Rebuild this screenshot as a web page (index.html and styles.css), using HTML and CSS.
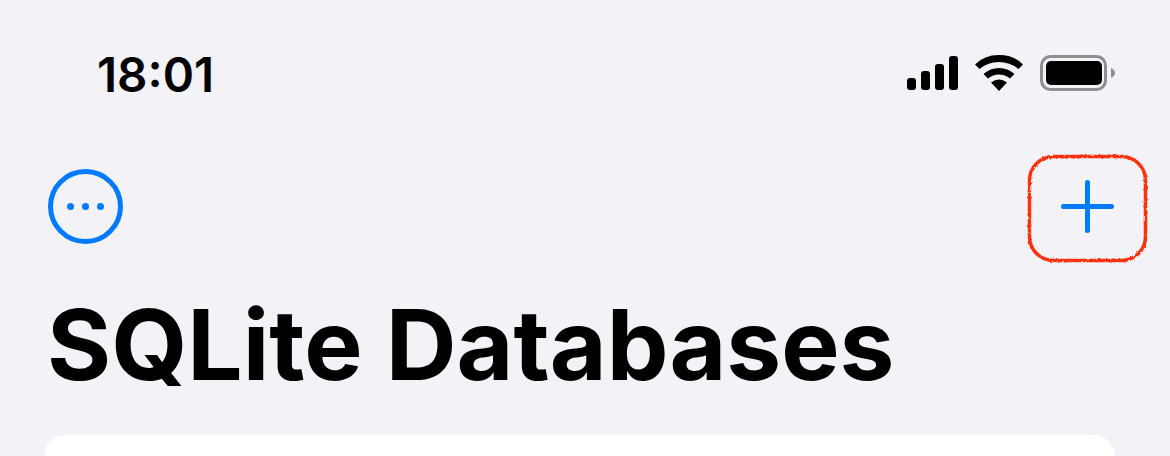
FILE: index.html
```html
<!DOCTYPE html>
<html lang="en">
<head>
    <meta charset="UTF-8">
    <meta name="viewport" content="width=device-width, initial-scale=1.0">
    <title>SQLite Databases</title>
    <link rel="stylesheet" href="styles.css">
</head>
<body>
    <div class="status-bar">
        <span class="time">18:01</span>
        <div class="status-icons">
            <svg class="signal" width="51" height="34" viewBox="0 0 51 34">
                <rect x="0" y="22" width="9" height="12" rx="3"/>
                <rect x="14" y="15" width="9" height="19" rx="3"/>
                <rect x="28" y="8" width="9" height="26" rx="3"/>
                <rect x="42" y="0" width="9" height="34" rx="3"/>
            </svg>
            <svg class="wifi" width="48" height="36" viewBox="0 0 48 36">
                <path d="M24 36 L16 27.500 Q24 21.500 32 27.500 Z"/>
                <path d="M24 0 Q9 0 0 9.500 L4.500 14 Q13 7 24 7 Q35 7 43.500 14 L48 9.500 Q39 0 24 0 Z"/>
                <path d="M24 13 Q15 13 8.500 19 L13 23.500 Q18 19.500 24 19.500 Q30 19.500 35 23.500 L39.500 19 Q33 13 24 13 Z"/>
            </svg>
            <svg class="battery" width="75" height="36" viewBox="0 0 75 36">
                <rect x="1.500" y="1.500" width="64" height="33" rx="9" fill="none" stroke="#8e8e93" stroke-width="3"/>
                <rect x="6" y="6" width="56" height="24" rx="5"/>
                <path d="M71 13 Q75 15 75 18 Q75 21 71 23 Z" fill="#8e8e93"/>
            </svg>
        </div>
    </div>

    <div class="nav-bar">
        <svg class="more-icon" width="75" height="75" viewBox="0 0 75 75">
            <circle cx="37.500" cy="37.500" r="35" fill="none" stroke="#007aff" stroke-width="5"/>
            <circle cx="22.500" cy="37.500" r="3.500" fill="#007aff"/>
            <circle cx="37.500" cy="37.500" r="3.500" fill="#007aff"/>
            <circle cx="52.500" cy="37.500" r="3.500" fill="#007aff"/>
        </svg>
        <button class="add-btn">
            <svg width="53" height="53" viewBox="0 0 53 53">
                <path d="M26.500 2.500 V50.500 M2.500 26.500 H50.500" fill="none" stroke="#007aff" stroke-width="5" stroke-linecap="round"/>
            </svg>
            <!-- hand drawn red marker round the button -->
            <svg class="marker" width="121" height="109" viewBox="0 0 121 109">
                <filter id="rough" x="-5%" y="-5%" width="110%" height="110%">
                    <feTurbulence type="fractalNoise" baseFrequency="0.35" numOctaves="2" seed="4"/>
                    <feDisplacementMap in="SourceGraphic" scale="3"/>
                    <feGaussianBlur stdDeviation="0.6"/>
                </filter>
                <rect x="2.500" y="2.500" width="116" height="104" rx="24" fill="none" stroke="#ff3211" stroke-width="3.500" filter="url(#rough)"/>
            </svg>
        </button>
    </div>

    <h1>SQLite Databases</h1>

    <div class="card"></div>
</body>
</html>
```

FILE: styles.css
```css
body {
    margin: 0;
    height: 456px;
    overflow: hidden;
    background-color: #f2f2f7;
    font-family: Inter, "Liberation Sans", sans-serif;
    color: #000;
}
.status-bar {
    display: flex;
    justify-content: space-between;
    align-items: center;
    height: 36px;
    padding: 55px 55px 0 97px;
}
.time {
    font-size: 47.500px;
    font-weight: 600;
    line-height: 36px;
    position: relative;
    top: 2px;
}
.status-icons {
    display: flex;
    align-items: center;
    gap: 17px;
}
.nav-bar {
    display: flex;
    justify-content: space-between;
    align-items: flex-start;
    height: 109px;
    margin-top: 63px;
    padding: 0 22px 0 48px;
}
.more-icon {
    margin-top: 15px;
}
.add-btn {
    position: relative;
    display: flex;
    justify-content: center;
    box-sizing: border-box;
    width: 121px;
    height: 109px;
    padding: 26px 0 0;
    background: none;
    border: none;
}
.marker {
    position: absolute;
    top: 0;
    left: 0;
}
h1 {
    margin: 22px 0 0 47px;
    font-size: 98px;
    font-weight: 700;
    line-height: 120px;
}
.card {
    height: 21px;
    margin: 30px 55px 0 44px;
    background-color: #fff;
    border-radius: 30px 30px 0 0;
}
```
